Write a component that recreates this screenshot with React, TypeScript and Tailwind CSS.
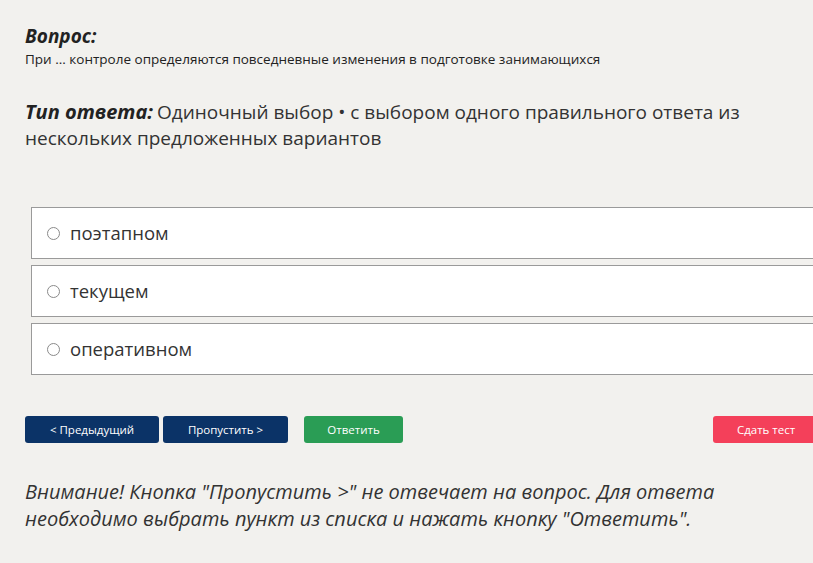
const OPTIONS = ["поэтапном", "текущем", "оперативном"];

export default function App() {
  return (
    <div className="w-[813px] h-[563px] overflow-hidden bg-[#f2f1ee] font-['Open_Sans',sans-serif] text-[#222]">
      <div className="w-[860px] pl-[25px] pt-[24px]">
        <h1 className="text-[19px] leading-[24px] font-bold italic">Вопрос:</h1>
        <p className="mt-[2px] text-[13.5px] leading-[18px]">
          При ... контроле определяются повседневные изменения в подготовке занимающихся
        </p>

        <p className="mt-[31px] w-[780px] text-[19px] leading-[26px] text-[#333]">
          <span className="mr-[4px] text-[20px] font-bold italic text-[#222]">Тип ответа:</span>Одиночный выбор • с
          выбором одного правильного ответа из нескольких предложенных вариантов
        </p>

        <div className="mt-[56px] ml-[6px] flex flex-col gap-[6px]">
          {OPTIONS.map((o) => (
            <label
              key={o}
              className="flex h-[52px] items-center gap-[10px] border border-[#9a9a9a] bg-white pl-[15px]"
            >
              <span className="h-[13px] w-[13px] rounded-full border border-[#8a8a8a] bg-white" />
              <span className="text-[18.5px] text-[#333]">{o}</span>
            </label>
          ))}
        </div>

        <div className="mt-[41px] flex items-center">
          <button className="h-[27px] w-[134px] rounded-[3px] bg-[#0b3367] text-[11.5px] text-white">
            &lt; Предыдущий
          </button>
          <button className="ml-[4px] h-[27px] w-[125px] rounded-[3px] bg-[#0b3367] text-[11.5px] text-white">
            Пропустить &gt;
          </button>
          <button className="ml-[16px] h-[27px] w-[99px] rounded-[3px] bg-[#2a9d55] text-[11.5px] text-white">
            Ответить
          </button>
          <button className="ml-[310px] h-[27px] w-[106px] rounded-[3px] bg-[#f4405a] text-[11.5px] text-white">
            Сдать тест
          </button>
        </div>

        <p className="mt-[35px] w-[730px] text-[20px] leading-[27px] italic text-[#333]">
          Внимание! Кнопка "Пропустить &gt;" не отвечает на вопрос. Для ответа необходимо выбрать пункт из списка
          и нажать кнопку "Ответить".
        </p>
      </div>
    </div>
  );
}
